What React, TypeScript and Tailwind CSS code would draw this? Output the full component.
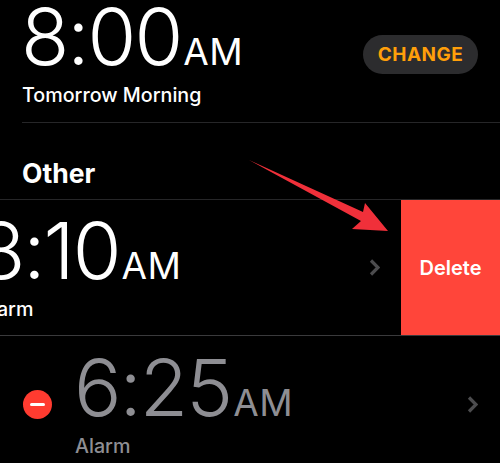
const font = "font-['Inter','Liberation_Sans',sans-serif]";

function Time({ value, gray }: { value: string; gray?: boolean }) {
  return (
    <div className={`flex items-baseline ${gray ? "text-[#8e8e93]" : "text-white"}`}>
      <span className="text-[79px] leading-none font-[260] tracking-[-2px] -ml-[1px]">{value}</span>
      <span className="text-[37px] leading-none font-normal tracking-[0.5px] ml-[2px]">AM</span>
    </div>
  );
}

function Chevron({ className }: { className: string }) {
  return (
    <svg className={className} width="11" height="17" viewBox="0 0 11 17" fill="none">
      <path d="M2 1.5 L9 8.5 L2 15.5" stroke="#4c4c4e" strokeWidth="3.2" />
    </svg>
  );
}

export default function App() {
  return (
    <div className={`relative w-[500px] h-[463px] overflow-hidden bg-black ${font}`}>
      {/* next alarm */}
      <div className="h-[123px] ml-[22px] border-b border-[#262628] flex justify-between">
        <div className="-mt-[3px]">
          <Time value="8:00" />
          <div className="mt-[6px] text-[19.7px] leading-[26px] font-medium text-white">Tomorrow Morning</div>
        </div>
        <div className="mt-[35px] mr-[22px] w-[115px] h-[39px] pt-[2px] rounded-full bg-[#2c2c2e] flex items-center justify-center text-[#ff9f0a] text-[19px] font-bold tracking-[0.5px]">
          CHANGE
        </div>
      </div>

      <div className="h-[77px] pl-[22px] pt-[35px] text-[26.5px] leading-[30px] font-bold text-white border-b border-[#262628]">
        Other
      </div>

      {/* swiped row */}
      <div className="h-[136px] flex border-b border-[#3a3a3c] overflow-hidden">
        <div className="flex-1 min-w-0 flex items-start relative">
          <div className="ml-[-22px] mt-[11px] shrink-0">
            <Time value="8:10" />
            <div className="mt-[6px] text-[19.7px] leading-[26px] font-medium text-white">Alarm</div>
          </div>
          <Chevron className="absolute right-[21px] top-[59px]" />
        </div>
        <div className="w-[99px] bg-[#ff453a] flex items-center justify-center text-white text-[20px] font-semibold">
          Delete
        </div>
      </div>

      {/* editing row */}
      <div className="h-[126px] flex items-start pl-[23px] relative">
        <div className="mt-[54px] w-[29px] h-[29px] rounded-full bg-[#ff3b30] flex items-center justify-center shrink-0">
          <div className="w-[15px] h-[3px] rounded-full bg-white" />
        </div>
        <div className="ml-[23px] mt-[12px]">
          <Time value="6:25" gray />
          <div className="mt-[6px] text-[19.7px] leading-[26px] font-medium text-[#8e8e93]">Alarm</div>
        </div>
        <Chevron className="absolute right-[22px] top-[60px]" />
      </div>

      {/* annotation arrow */}
      <svg className="absolute left-0 top-0" width="500" height="463" viewBox="0 0 500 463" fill="none">
        <path d="M249 160 L363 212 L365 203 L388 231 L352 229 L361 221 Z" fill="#f0303a" />
      </svg>
    </div>
  );
}
